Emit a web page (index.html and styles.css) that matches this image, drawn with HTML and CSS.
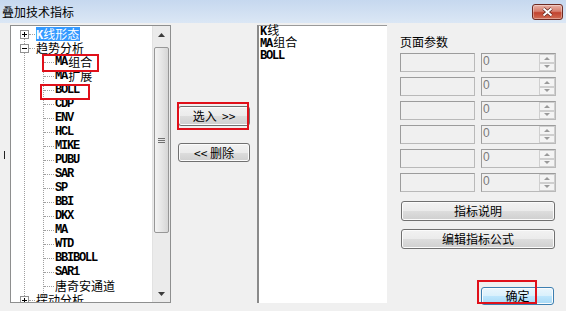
FILE: index.html
```html
<!DOCTYPE html>
<html lang="zh-CN">
<head>
    <meta charset="UTF-8">
    <meta name="viewport" content="width=device-width, initial-scale=1.0">
    <title>叠加技术指标</title>

    <link rel="stylesheet" href="styles.css">
</head>
<body>
    <div class="window">
        <div class="titlebar">
            <span class="title">叠加技术指标</span>
            <span class="close-btn">
                <svg width="15" height="10" viewBox="0 0 15 10">
                    <path d="M3.5 1.5l8 7M11.5 1.5l-8 7" stroke="#5a2019" stroke-width="3.4" />
                    <path d="M3.5 1.5l8 7M11.5 1.5l-8 7" stroke="#fff" stroke-width="2" />
                </svg>
            </span>
        </div>

        <div class="content">
            <span class="edge-mark"></span>

            <!-- indicator tree -->
            <div class="tree">
                <div class="tree-body">
                    <div class="node">
                        <span class="box"><svg width="9" height="9"><rect x=".5" y=".5" width="8" height="8" fill="#fff" stroke="#919191" /><path d="M2 4.5h5M4.5 2v5" stroke="#000" /></svg></span>
                        <span class="hline"></span>
                        <span class="label sel"><span class="en">K</span>线形态</span>
                    </div>
                    <div class="node">
                        <span class="box"><svg width="9" height="9"><rect x=".5" y=".5" width="8" height="8" fill="#fff" stroke="#919191" /><path d="M2 4.5h5" stroke="#000" /></svg></span>
                        <span class="hline"></span>
                        <span class="label">趋势分析</span>
                    </div>
                    <div class="children">
                        <div class="leaf"><span class="en">MA</span>组合</div>
                        <div class="leaf"><span class="en">MA</span>扩展</div>
                        <div class="leaf"><span class="en">BOLL</span></div>
                        <div class="leaf"><span class="en">CDP</span></div>
                        <div class="leaf"><span class="en">ENV</span></div>
                        <div class="leaf"><span class="en">HCL</span></div>
                        <div class="leaf"><span class="en">MIKE</span></div>
                        <div class="leaf"><span class="en">PUBU</span></div>
                        <div class="leaf"><span class="en">SAR</span></div>
                        <div class="leaf"><span class="en">SP</span></div>
                        <div class="leaf"><span class="en">BBI</span></div>
                        <div class="leaf"><span class="en">DKX</span></div>
                        <div class="leaf"><span class="en">MA</span></div>
                        <div class="leaf"><span class="en">WTD</span></div>
                        <div class="leaf"><span class="en">BBIBOLL</span></div>
                        <div class="leaf"><span class="en">SAR1</span></div>
                        <div class="leaf">唐奇安通道</div>
                    </div>
                    <div class="node">
                        <span class="box"><svg width="9" height="9"><rect x=".5" y=".5" width="8" height="8" fill="#fff" stroke="#919191" /><path d="M2 4.5h5M4.5 2v5" stroke="#000" /></svg></span>
                        <span class="hline"></span>
                        <span class="label">摆动分析</span>
                    </div>
                </div>
                <div class="vscroll">
                    <span class="arrow"><svg width="7" height="4"><polygon points="0,4 3.5,0 7,4" fill="#3c3c3c" /></svg></span>
                    <span class="thumb"><svg width="7" height="5"><path d="M0 .5h7M0 2.5h7M0 4.5h7" stroke="#707070" /></svg></span>
                    <span class="track"></span>
                    <span class="arrow"><svg width="7" height="4"><polygon points="0,0 3.5,4 7,0" fill="#3c3c3c" /></svg></span>
                </div>
            </div>

            <div class="actions">
                <button class="btn move">选入 &nbsp;&gt;&gt;</button>
                <button class="btn move remove">&lt;&lt; 删除</button>
            </div>

            <!-- chosen indicators -->
            <div class="selected">
                <div><span class="en">K</span>线</div>
                <div><span class="en">MA</span>组合</div>
                <div><span class="en">BOLL</span></div>
            </div>

            <div class="params">
                <div class="params-title">页面参数</div>
                <div class="param-rows">
                    <div class="param-row"><span class="field"></span><span class="spin"><span class="spin-val">0</span><span class="spin-btns"><span class="spin-up"></span><span class="spin-down"></span></span></span></div>
                    <div class="param-row"><span class="field"></span><span class="spin"><span class="spin-val">0</span><span class="spin-btns"><span class="spin-up"></span><span class="spin-down"></span></span></span></div>
                    <div class="param-row"><span class="field"></span><span class="spin"><span class="spin-val">0</span><span class="spin-btns"><span class="spin-up"></span><span class="spin-down"></span></span></span></div>
                    <div class="param-row"><span class="field"></span><span class="spin"><span class="spin-val">0</span><span class="spin-btns"><span class="spin-up"></span><span class="spin-down"></span></span></span></div>
                    <div class="param-row"><span class="field"></span><span class="spin"><span class="spin-val">0</span><span class="spin-btns"><span class="spin-up"></span><span class="spin-down"></span></span></span></div>
                    <div class="param-row"><span class="field"></span><span class="spin"><span class="spin-val">0</span><span class="spin-btns"><span class="spin-up"></span><span class="spin-down"></span></span></span></div>
                </div>
                <button class="btn wide first">指标说明</button>
                <button class="btn wide">编辑指标公式</button>
                <button class="btn ok">确定</button>
            </div>
        </div>

        <!-- red annotation boxes -->
        <span class="mark mark-ma"></span>
        <span class="mark mark-boll"></span>
        <span class="mark mark-add"></span>
        <span class="mark mark-ok"></span>
    </div>
</body>
</html>
```

FILE: styles.css
```css
body { margin: 0; background: #f0f0f0; font-family: "Noto Sans CJK SC", sans-serif; font-size: 12px; color: #000; }
.window { position: relative; width: 566px; height: 311px; overflow: hidden; background: #f0f0f0; }

/* title bar */
.titlebar { height: 23px; display: flex; justify-content: space-between; align-items: flex-start; padding: 0 3px 0 2px; background: linear-gradient(#c6d8ef, #dbe7f5); box-sizing: border-box; }
.title { line-height: 24px; font-size: 12px; }
.close-btn { margin-top: 4px; width: 31px; height: 16px; box-sizing: border-box; border: 1px solid #6e2a22; border-radius: 3px; display: flex; align-items: center; justify-content: center; background: linear-gradient(#e8b1a6 0%, #d77e6e 45%, #c2432f 55%, #d26d55 100%); box-shadow: inset 0 0 0 1px rgba(255,255,255,0.35); }

.content { display: flex; align-items: flex-start; padding: 2px 0 0 4px; }
.edge-mark { width: 1px; height: 8px; background: #222; margin: 126px 5px 0 0; }

/* tree */
.tree { width: 161px; height: 278px; box-sizing: border-box; border: 1px solid #8e8f8f; background: #fff; display: flex; }
.tree-body { position: relative; flex: 1; overflow: hidden; padding: 1px 0 0 9px; }
.tree-body::before { content: ""; position: absolute; left: 13px; top: 12px; bottom: 0; border-left: 1px dotted #a0a0a0; }
.node { height: 14px; display: flex; align-items: center; white-space: nowrap; }
.box { position: relative; width: 9px; height: 9px; display: flex; }
.hline { width: 6px; border-top: 1px dotted #a0a0a0; margin-right: 1px; }
.label { line-height: 14px; height: 14px; padding: 0 1px 0 0; }
.label.sel { background: #3399ff; color: #fff; }
.children { margin-left: 23px; border-left: 1px dotted #a0a0a0; }
.leaf { height: 14px; line-height: 14px; display: flex; align-items: center; white-space: nowrap; }
.leaf::before { content: ""; width: 10px; border-top: 1px dotted #a0a0a0; margin-right: 1px; }
.en { font-family: "Liberation Mono", monospace; font-weight: bold; font-size: 12px; letter-spacing: -1.2px; margin-right: 1.2px; }

.vscroll { width: 17px; display: flex; flex-direction: column; align-items: center; background: #ebebeb; border-left: 1px solid #e2e2e2; }
.arrow { height: 17px; width: 17px; display: flex; align-items: center; justify-content: center; }
.thumb { margin-top: 4px; width: 15px; height: 186px; box-sizing: border-box; border: 1px solid #979797; border-radius: 2px; background: linear-gradient(90deg, #f3f3f3, #e6e6e6 50%, #d6d6d6); display: flex; align-items: center; justify-content: center; }
.track { flex: 1; }

/* buttons */
.btn { font-family: "Noto Sans CJK SC", sans-serif; font-size: 12px; line-height: 16px; color: #000; padding: 0; box-sizing: border-box; border: 1px solid #707070; border-radius: 3px; background: linear-gradient(#f2f2f2 0%, #ebebeb 50%, #dddddd 51%, #cfcfcf 100%); box-shadow: inset 0 0 0 1px #fbfbfb; }
.actions { display: flex; flex-direction: column; margin-left: 7px; width: 72px; }
.btn.move { height: 20px; margin-top: 81px; }
.btn.remove { height: 19px; margin-top: 17px; }

/* selected list */
.selected { margin-left: 7px; width: 130px; height: 278px; box-sizing: border-box; background: #fff; border-left: 2px solid #8a8a8a; border-top: 1px solid #9a9a9a; padding: 0 0 0 1px; font-family: "Liberation Mono", "Noto Sans CJK SC", monospace; line-height: 12px; }

/* params */
.params { margin-left: 13px; width: 156px; display: flex; flex-direction: column; }
.params-title { margin-top: 9px; line-height: 16px; height: 16px; font-size: 12px; }
.param-rows { margin-top: 3px; display: flex; flex-direction: column; gap: 5px; }
.param-row { display: flex; gap: 6px; height: 19px; }
.field { width: 75px; box-sizing: border-box; border: 1px solid #b9b9b9; border-top-color: #9c9c9c; border-left-color: #9c9c9c; }
.spin { width: 75px; box-sizing: border-box; border: 1px solid #b9b9b9; border-top-color: #9c9c9c; border-left-color: #9c9c9c; display: flex; justify-content: space-between; }
.spin-val { font-family: "Liberation Sans", sans-serif; color: #7a7a7a; line-height: 15px; padding-left: 1px; }
.spin-btns { width: 16px; display: flex; flex-direction: column; }
.spin-up, .spin-down { flex: 1; box-sizing: border-box; border: 1px solid #cfcfcf; background: #f4f4f4; display: flex; align-items: center; justify-content: center; }
.spin-up::after { content: ""; border: 3px solid transparent; border-top: 0; border-bottom: 3px solid #9a9a9a; }
.spin-down::after { content: ""; border: 3px solid transparent; border-bottom: 0; border-top: 3px solid #9a9a9a; }
.btn.wide { width: 154px; height: 20px; margin: 8px 0 0 1px; }
.btn.wide.first { margin-top: 9px; }
.btn.ok { align-self: flex-end; width: 73px; height: 18px; margin: 38px 2px 0 0; border-color: #3c7fb1; background: linear-gradient(#eaf6fd 0%, #d9f0fc 50%, #bee6fd 51%, #a7d9f5 100%); }

/* annotations */
.mark { position: absolute; box-sizing: border-box; border: 2px solid #e0101a; }
.mark-ma { left: 42px; top: 54px; width: 57px; height: 18px; }
.mark-boll { left: 40px; top: 84px; width: 50px; height: 16px; }
.mark-add { left: 177px; top: 102px; width: 72px; height: 28px; }
.mark-ok { left: 477px; top: 280px; width: 60px; height: 24px; }
```
